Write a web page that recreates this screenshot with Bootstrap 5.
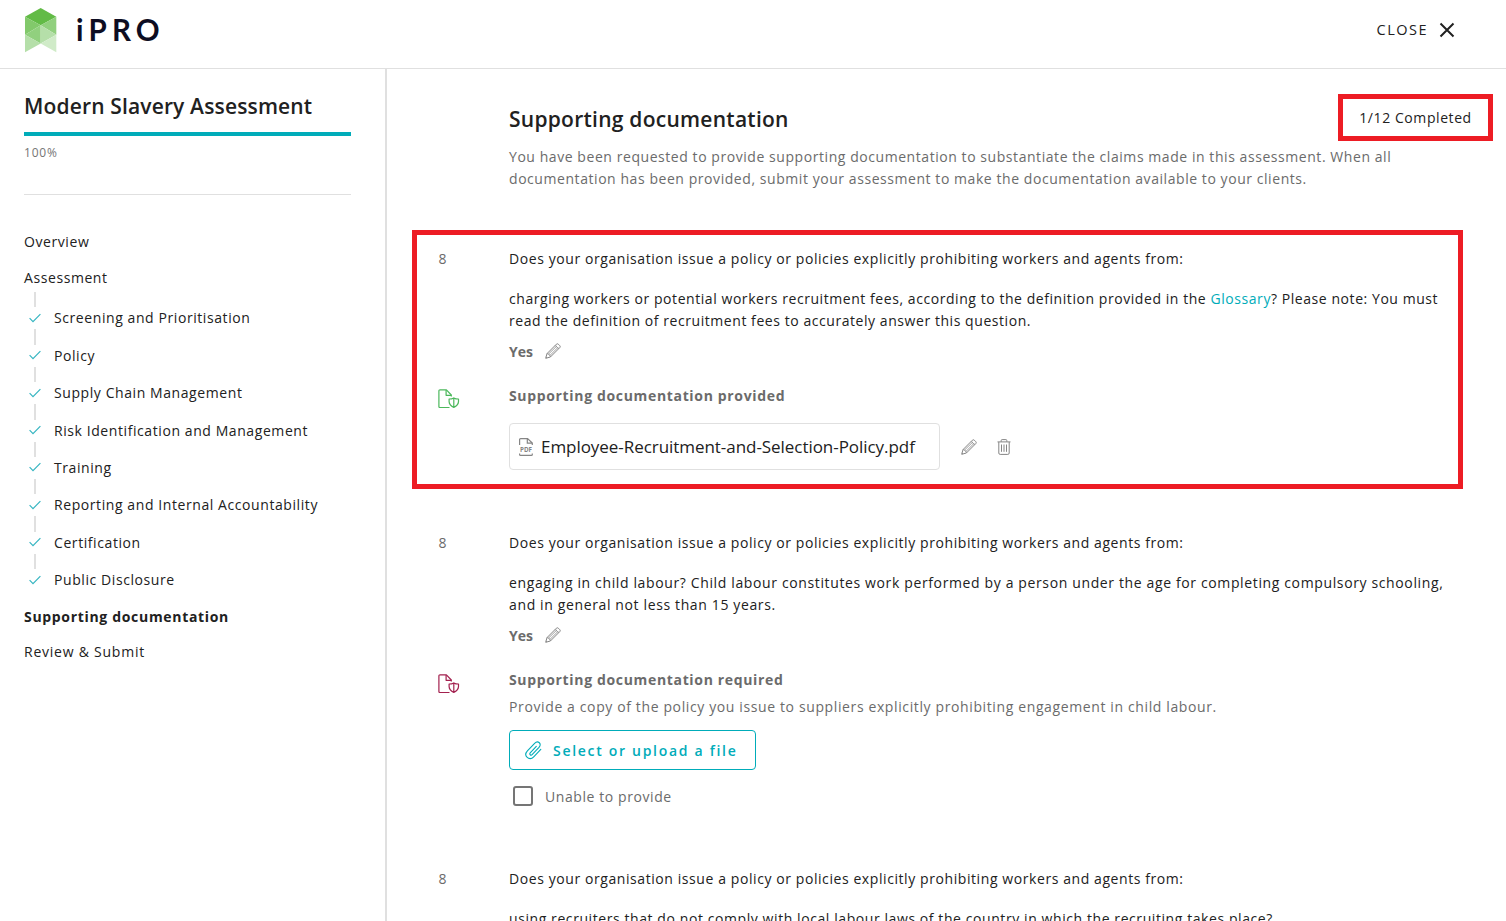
<!DOCTYPE html>
<html lang="en">

<head>
    <meta charset="UTF-8">
    <meta name="viewport" content="width=device-width, initial-scale=1.0">
    <title>iPRO - Modern Slavery Assessment</title>
    <link href="https://cdn.jsdelivr.net/npm/bootstrap@5.3.0/dist/css/bootstrap.min.css" rel="stylesheet">
    <style>
        body {
            font-family: "Open Sans", "Noto Sans", sans-serif;
            font-size: 14px;
            line-height: 22px;
            letter-spacing: 0.58px;
            color: #212121;
            height: 100vh;
            overflow: hidden;
        }

        a {
            color: #00acb9;
            text-decoration: none;
        }

        .topbar {
            height: 69px;
            border-bottom: 1px solid #e0e0e0;
            padding: 0 51px 8px 24px;
        }

        .logo-text {
            font-family: Lato, sans-serif;
            font-weight: 700;
            font-size: 29.5px;
            line-height: 44px;
            letter-spacing: 5.2px;
            color: #0d0d22;
            margin-left: 18px;
        }

        .close-link {
            font-size: 14.5px;
            font-weight: 500;
            letter-spacing: 1.5px;
            color: #212121;
        }

        .page-title {
            font-size: 21px;
            line-height: 28px;
            font-weight: 600;
            letter-spacing: 0.15px;
        }

        .main-head .page-title {
            letter-spacing: 0.26px;
            margin-top: 11px;
        }

        .sidebar {
            width: 387px;
            border-right: 2px solid #e0e0e0;
            padding: 23px 34px 0 24px;
        }

        .assess-progress {
            height: 4px;
            margin-top: 12px;
        }

        .assess-progress .progress-bar {
            background-color: #00acb9;
        }

        .percent {
            font-size: 12px;
            line-height: 18px;
            letter-spacing: 0.8px;
            margin-top: 8px;
            padding-bottom: 32px;
            border-bottom: 1px solid #e0e0e0;
            color: #757575;
        }

        .side-nav a {
            color: #212121;
        }

        .side-nav .fw-bold {
            letter-spacing: 0.68px;
        }

        /* grey tick of line between two steps */
        .steps li::before {
            content: "";
            display: block;
            width: 2px;
            height: 15.4px;
            margin-left: 10px;
            background: #e0e0e0;
        }

        .steps a {
            padding-left: 5px;
            gap: 13px;
        }

        .steps svg {
            margin-bottom: 1px;
        }

        .text-soft {
            color: #6b6b6b;
        }

        .icon-soft {
            color: #858585;
        }

        .main-head {
            padding: 25px 13px 0 122px;
        }

        .completed {
            width: 155px;
            height: 47px;
            border: 5px solid #ed1c24;
        }

        .question {
            margin: 0 43px 25px 25px;
            border: 5px solid transparent;
            padding: 13px 5px 14px 21.5px;
        }

        .question.highlighted {
            border-color: #ed1c24;
        }

        .question .fw-bold {
            letter-spacing: 0.66px;
        }

        .side-cell {
            width: 70.5px;
        }

        .answer {
            margin-top: 9px;
            margin-bottom: 22px;
        }

        .answer strong {
            width: 36px;
            letter-spacing: 0;
        }

        .file-box {
            width: 431px;
            height: 47px;
            border: 1px solid #e0e0e0;
            border-radius: 4px;
            padding-left: 9px;
            font-size: 17px;
            letter-spacing: -0.05px;
        }

        .btn-upload {
            --bs-btn-color: #00acb9;
            --bs-btn-border-color: #00acb9;
            --bs-btn-hover-bg: #00acb9;
            --bs-btn-hover-color: #fff;
            --bs-btn-border-radius: 4px;
            width: 247px;
            height: 40px;
            padding: 0 0 0 15px;
            margin-top: 14px;
            font-size: 14px;
            font-weight: 600;
            letter-spacing: 1.7px;
        }

        .unable {
            margin: 16px 0 -2px 4px;
        }

        .unable .form-check-input {
            width: 20px;
            height: 20px;
            border: 2px solid #757575;
            border-radius: 3px;
        }

        svg {
            flex-shrink: 0;
        }
    </style>
</head>

<body class="d-flex flex-column">
    <!-- shared icons -->
    <svg class="d-none">
        <symbol id="check" viewBox="0 0 12 10">
            <path d="M.6 5.2 4 8.6 11.4 1.2" fill="none" stroke="currentColor" stroke-width="1.2" />
        </symbol>
        <symbol id="pencil" viewBox="0 0 16 16">
            <g fill="none" stroke="currentColor" stroke-width="1" stroke-linejoin="round">
                <path d="M.7 15.3 2 10.6 11.4 1.2Q12.3.3 13.3 1.2L14.8 2.7Q15.7 3.7 14.8 4.6L5.4 14Z" />
                <path d="M2 10.6 3.7 10.9 4 12 5.1 12.3 5.4 14M3.7 10.9 11.9 2.9M5.1 12.3 13.2 4.2M10.2 2.4 13.6 5.8M.9 14 2 15.1" stroke-width=".8" />
            </g>
        </symbol>
        <symbol id="doc-shield" viewBox="0 0 22 20">
            <g fill="none" stroke="currentColor" stroke-width="1.2" stroke-linejoin="round">
                <path d="M11.5 18.5H2Q.9 18.5 .9 17.4V2Q.9.9 2 .9H8.4L13.3 6V7.6" />
                <path d="M8.1 1V6.3H13.3" />
                <path d="M15.8 8.9Q13.9 10 11.1 10V12.6Q11.3 16.2 15.8 18.4Q20.3 16.2 20.5 12.6V10Q17.7 10 15.8 8.9ZM15.8 8.9V18.4" />
            </g>
        </symbol>
    </svg>

    <header class="topbar d-flex align-items-center justify-content-between flex-shrink-0">
        <a href="#" class="d-flex align-items-center">
            <svg width="34" height="46" viewBox="0 0 34 46">
                <path d="M16.7 1 32.3 9.7 16.7 18.3 1 9.7Z" fill="#62bb46" />
                <path d="M1 9.7 16.7 18.3 1 27.7Z" fill="#82c96b" />
                <path d="M32.3 9.7V27.7L16.7 18.3Z" fill="#91d07e" />
                <path d="M16.7 18.3V36.4L1 27.7Z" fill="#91d07e" />
                <path d="M16.7 18.3 32.3 27.7 16.7 36.4Z" fill="#b5dfa9" />
                <path d="M1 27.7 16.7 36.4 1 45.3Z" fill="#b5dfa9" />
                <path d="M32.3 27.7V45.3L16.7 36.4Z" fill="#d0ebc8" />
            </svg>
            <span class="logo-text">iPRO</span>
        </a>
        <a href="#" class="close-link d-flex align-items-center">CLOSE
            <svg style="margin-left: 11px" width="16" height="16" viewBox="0 0 16 16">
                <path d="M1.5 1.5 14.5 14.5M14.5 1.5 1.5 14.5" stroke="currentColor" stroke-width="2" />
            </svg>
        </a>
    </header>

    <div class="d-flex flex-grow-1 overflow-hidden">
        <aside class="sidebar flex-shrink-0">
            <h1 class="page-title mb-0">Modern Slavery Assessment</h1>
            <div class="progress rounded-0 assess-progress">
                <div class="progress-bar w-100"></div>
            </div>
            <div class="percent">100%</div>

            <nav class="side-nav">
                <a href="#" class="d-block" style="margin-top: 36px">Overview</a>
                <a href="#" class="d-block" style="margin: 14px 0 3px">Assessment</a>
                <ul class="steps list-unstyled mb-0" id="steps"></ul>
                <a href="#" class="d-block fw-bold" style="margin: 15px 0 13px">Supporting documentation</a>
                <a href="#" class="d-block" style="letter-spacing: .76px">Review &amp; Submit</a>
            </nav>
        </aside>

        <main class="flex-grow-1">
            <div class="main-head">
                <div class="d-flex justify-content-between">
                    <h2 class="page-title mb-0">Supporting documentation</h2>
                    <div class="completed d-flex align-items-center justify-content-center">1/12 Completed</div>
                </div>
                <p class="text-soft mb-0 pe-5" style="margin-top: 5px; letter-spacing: .56px">You have been requested to provide supporting documentation to substantiate the claims made in this assessment. When all documentation has been provided, submit your assessment to make the documentation available to your clients.</p>
            </div>

            <section class="question highlighted d-flex" style="margin-top: 40px">
                <div class="side-cell text-soft flex-shrink-0">8
                    <svg class="d-block" style="margin: 119px 0 0 -.5px; color: #4cb85c" width="22" height="20"><use href="#doc-shield" /></svg>
                </div>
                <div>
                    <p style="margin-bottom: 18px">Does your organisation issue a policy or policies explicitly prohibiting workers and agents from:</p>
                    <p class="mb-0" style="letter-spacing: .56px">charging workers or potential workers recruitment fees, according to the definition provided in the <a href="#">Glossary</a>? Please note: You must read the definition of recruitment fees to accurately answer this question.</p>
                    <div class="answer d-flex text-soft"><strong>Yes</strong>
                        <svg class="icon-soft" style="margin-top: 2px" width="16" height="16"><use href="#pencil" /></svg>
                    </div>
                    <div class="text-soft fw-bold">Supporting documentation provided</div>
                    <div class="d-flex align-items-center icon-soft mt-3">
                        <div class="file-box d-flex align-items-center">
                            <svg width="14" height="18" viewBox="0 0 14 18" fill="none" stroke="currentColor" stroke-width="1.2">
                                <path d="M.6 7V1.6Q.6.6 1.6.6H8.6L13.3 5V7M8.3.8V5.2H13.2M.6 15.5V16.4Q.6 17.4 1.6 17.4H12.3Q13.3 17.4 13.3 16.4V15.5" />
                                <text x="1" y="14.3" font-size="7.4" font-weight="700" letter-spacing="0" textLength="12" lengthAdjust="spacingAndGlyphs" fill="currentColor" stroke="none">PDF</text>
                            </svg>
                            <span class="ms-2" style="color: #212121">Employee-Recruitment-and-Selection-Policy.pdf</span>
                        </div>
                        <svg style="margin-left: 21px" width="16" height="16"><use href="#pencil" /></svg>
                        <svg style="margin-left: 20px" width="14" height="16" viewBox="0 0 14 16" fill="none" stroke="currentColor">
                            <path d="M.5 2.9H13.5M4.2 2.7V1.5Q4.2.6 5.1.6H8.9Q9.8.6 9.8 1.5V2.7M1.8 3V14Q1.8 15.4 3.2 15.4H10.8Q12.2 15.4 12.2 14V3M4.5 5.5V12.8M7 5.5V12.8M9.5 5.5V12.8" />
                        </svg>
                    </div>
                </div>
            </section>

            <section class="question d-flex">
                <div class="side-cell text-soft flex-shrink-0">8
                    <svg class="d-block" style="margin: 120px 0 0 -.5px; color: #a3214f" width="22" height="20"><use href="#doc-shield" /></svg>
                </div>
                <div>
                    <p style="margin-bottom: 18px">Does your organisation issue a policy or policies explicitly prohibiting workers and agents from:</p>
                    <p class="mb-0" style="letter-spacing: .63px">engaging in child labour? Child labour constitutes work performed by a person under the age for completing compulsory schooling, and in general not less than 15 years.</p>
                    <div class="answer d-flex text-soft"><strong>Yes</strong>
                        <svg class="icon-soft" style="margin-top: 2px" width="16" height="16"><use href="#pencil" /></svg>
                    </div>
                    <div class="text-soft fw-bold">Supporting documentation required</div>
                    <div class="text-soft" style="margin-top: 6px; line-height: 19px; letter-spacing: .62px">Provide a copy of the policy you issue to suppliers explicitly prohibiting engagement in child labour.</div>
                    <button type="button" class="btn btn-upload d-flex align-items-center">
                        <svg width="17" height="19" viewBox="0 0 17 19" fill="none" stroke="currentColor" stroke-width="1.1" stroke-linecap="round">
                            <path d="M11.3 5.3 5.2 11.9C4.1 13.2 5.8 15 7.1 13.7L14 6.4C17.3 2.7 13 -.9 9.6 2.3L2.4 9.8C-2 14.7 4.2 20.6 8.7 15.9L15.8 8.3" />
                        </svg>
                        <span style="margin-left: 11px">Select or upload a file</span>
                    </button>
                    <div class="unable d-flex text-soft">
                        <input class="form-check-input mt-0" type="checkbox" id="unable">
                        <label for="unable" style="margin-left: 12px">Unable to provide</label>
                    </div>
                </div>
            </section>

            <section class="question d-flex">
                <div class="side-cell text-soft flex-shrink-0">8</div>
                <div>
                    <p style="margin-bottom: 18px">Does your organisation issue a policy or policies explicitly prohibiting workers and agents from:</p>
                    <p class="mb-0">using recruiters that do not comply with local labour laws of the country in which the recruiting takes place?</p>
                </div>
            </section>
        </main>
    </div>

    <script src="https://cdn.jsdelivr.net/npm/bootstrap@5.3.0/dist/js/bootstrap.bundle.min.js"></script>
    <script>
        const steps = [
            "Screening and Prioritisation",
            "Policy",
            "Supply Chain Management",
            "Risk Identification and Management",
            "Training",
            "Reporting and Internal Accountability",
            "Certification",
            "Public Disclosure"
        ];

        document.getElementById("steps").innerHTML = steps.map(step => `
            <li><a href="#" class="d-flex align-items-center">
                <svg width="12" height="10" color="#35b5c1"><use href="#check" /></svg>${step}
            </a></li>`).join("");
    </script>
</body>

</html>
